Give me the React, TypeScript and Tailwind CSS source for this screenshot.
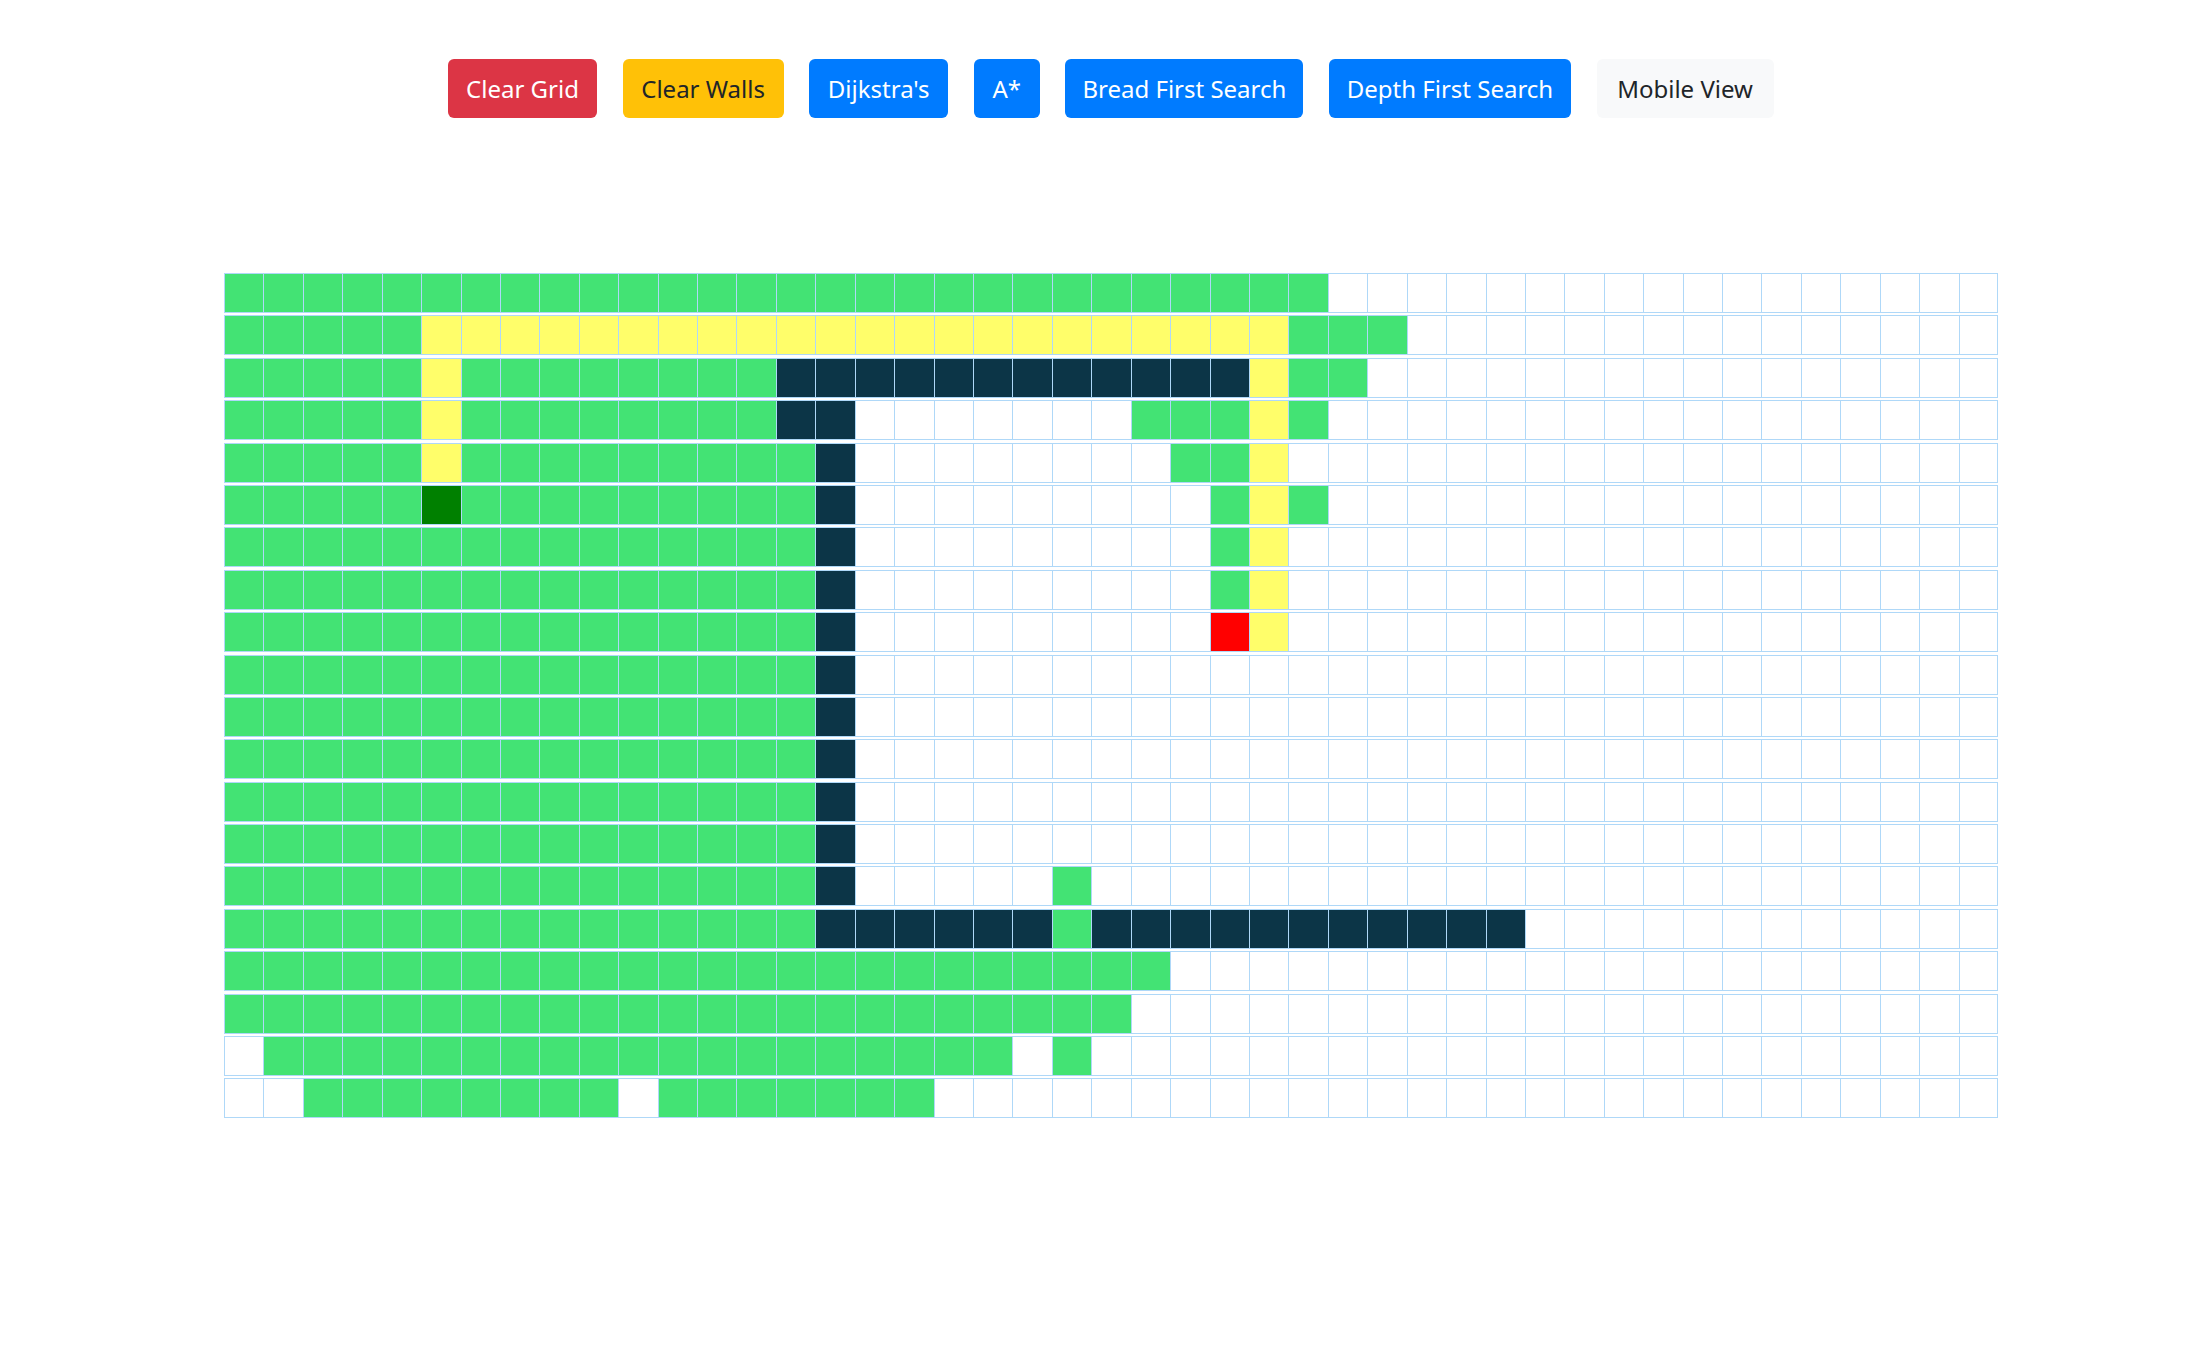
import React from 'react'

// g = visited, y = shortest path, w = wall, S = start, F = finish, . = empty
const rep = (c: string, n: number) => c.repeat(n)

const rows: string[] = [
  rep('g', 28) + rep('.', 17),
  rep('g', 5) + rep('y', 22) + rep('g', 3) + rep('.', 15),
  rep('g', 5) + 'y' + rep('g', 8) + rep('w', 12) + 'y' + rep('g', 2) + rep('.', 16),
  rep('g', 5) + 'y' + rep('g', 8) + rep('w', 2) + rep('.', 7) + rep('g', 3) + 'y' + 'g' + rep('.', 17),
  rep('g', 5) + 'y' + rep('g', 9) + 'w' + rep('.', 8) + rep('g', 2) + 'y' + rep('.', 18),
  rep('g', 5) + 'S' + rep('g', 9) + 'w' + rep('.', 9) + 'g' + 'y' + 'g' + rep('.', 17),
  rep('g', 15) + 'w' + rep('.', 9) + 'g' + 'y' + rep('.', 18),
  rep('g', 15) + 'w' + rep('.', 9) + 'g' + 'y' + rep('.', 18),
  rep('g', 15) + 'w' + rep('.', 9) + 'F' + 'y' + rep('.', 18),
  rep('g', 15) + 'w' + rep('.', 29),
  rep('g', 15) + 'w' + rep('.', 29),
  rep('g', 15) + 'w' + rep('.', 29),
  rep('g', 15) + 'w' + rep('.', 29),
  rep('g', 15) + 'w' + rep('.', 29),
  rep('g', 15) + 'w' + rep('.', 5) + 'g' + rep('.', 23),
  rep('g', 15) + rep('w', 6) + 'g' + rep('w', 11) + rep('.', 12),
  rep('g', 24) + rep('.', 21),
  rep('g', 23) + rep('.', 22),
  '.' + rep('g', 19) + '.' + 'g' + rep('.', 23),
  rep('.', 2) + rep('g', 8) + '.' + rep('g', 7) + rep('.', 27),
]

const cellColor: Record<string, string> = {
  '.': 'bg-white',
  g: 'bg-[#43e374]',
  y: 'bg-[#fffe6a]',
  w: 'bg-[#0c3547]',
  S: 'bg-[#008000]',
  F: 'bg-[#ff0000]',
}

const buttons = [
  { label: 'Clear Grid', w: 'w-[149px]', cls: 'bg-[#dc3545] text-white' },
  { label: 'Clear Walls', w: 'w-[161px]', cls: 'bg-[#ffc107] text-[#212529]' },
  { label: "Dijkstra's", w: 'w-[139px]', cls: 'bg-[#007bff] text-white' },
  { label: 'A*', w: 'w-[66px]', cls: 'bg-[#007bff] text-white' },
  { label: 'Bread First Search', w: 'w-[238px]', cls: 'bg-[#007bff] text-white' },
  { label: 'Depth First Search', w: 'w-[242px]', cls: 'bg-[#007bff] text-white' },
  { label: 'Mobile View', w: 'w-[177px]', cls: 'bg-[#f8f9fa] text-[#212529]' },
]

export default function App() {
  return (
    <div className="min-h-[1354px] w-full bg-white" style={{ fontFamily: '"Noto Sans", "Open Sans", sans-serif' }}>
      {/* Toolbar */}
      <div className="flex gap-[25.6px] pl-[448px] pt-[59px]">
        {buttons.map(b => (
          <button
            key={b.label}
            className={`${b.w} ${b.cls} h-[59px] rounded-[6px] text-[24px] leading-none flex items-center justify-center whitespace-nowrap`}
          >
            {b.label}
          </button>
        ))}
      </div>

      {/* Grid */}
      <div className="ml-[224px] mt-[155px] w-[1774px] flex flex-col gap-[2.4px]">
        {rows.map((row, r) => (
          <div key={r} className="grid grid-cols-[repeat(45,minmax(0,1fr))]">
            {row.split('').map((c, i) => (
              <div
                key={i}
                className={`h-[40px] border-y border-l border-[#afd8f8] ${i === 44 ? 'border-r' : ''} ${cellColor[c]}`}
              />
            ))}
          </div>
        ))}
      </div>
    </div>
  )
}
